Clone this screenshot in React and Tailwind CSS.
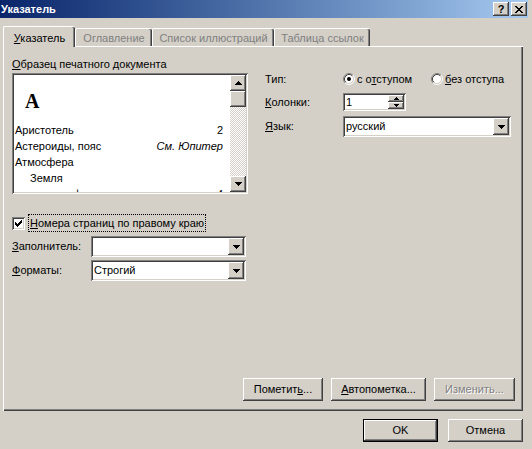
import React from "react";

const raised =
  "shadow-[inset_-1px_-1px_#404040,inset_1px_1px_#ffffff,inset_-2px_-2px_#808080,inset_2px_2px_#d4d0c8]";
const sunken =
  "shadow-[inset_1px_1px_#808080,inset_-1px_-1px_#ffffff,inset_2px_2px_#404040,inset_-2px_-2px_#d4d0c8]";

function DownArrow() {
  return (
    <svg width="7" height="4" viewBox="0 0 7 4" shapeRendering="crispEdges">
      <path d="M0 0h7v1h-1v1h-1v1h-1v1h-1v-1h-1v-1h-1v-1h-1z" fill="#000" />
    </svg>
  );
}
function UpArrow() {
  return (
    <svg width="7" height="4" viewBox="0 0 7 4" shapeRendering="crispEdges">
      <path d="M3 0h1v1h1v1h1v1h1v1h-7v-1h1v-1h1v-1h1z" fill="#000" />
    </svg>
  );
}
function SmallUp() {
  return (
    <svg width="5" height="3" viewBox="0 0 5 3" shapeRendering="crispEdges">
      <path d="M2 0h1v1h1v1h1v1h-5v-1h1v-1h1z" fill="#000" />
    </svg>
  );
}
function SmallDown() {
  return (
    <svg width="5" height="3" viewBox="0 0 5 3" shapeRendering="crispEdges">
      <path d="M0 0h5v1h-1v1h-1v1h-1v-1h-1v-1h-1z" fill="#000" />
    </svg>
  );
}

function Radio({ checked }) {
  return (
    <svg width="12" height="12" viewBox="0 0 12 12" className="shrink-0">
      <circle cx="6" cy="6" r="4.5" fill="#fff" />
      <path d="M2.11 9.89 A5.5 5.5 0 0 1 9.89 2.11" stroke="#808080" fill="none" />
      <path d="M9.89 2.11 A5.5 5.5 0 0 1 2.11 9.89" stroke="#ffffff" fill="none" />
      <path d="M2.82 9.18 A4.5 4.5 0 0 1 9.18 2.82" stroke="#404040" fill="none" />
      <path d="M9.18 2.82 A4.5 4.5 0 0 1 2.82 9.18" stroke="#d4d0c8" fill="none" />
      {checked && <circle cx="6" cy="6" r="2" fill="#000" />}
    </svg>
  );
}

function Combo({ className, value }) {
  return (
    <div className={`flex h-[21px] bg-white p-[2px] ${sunken} ${className}`}>
      <div className="flex-1 pl-[1px] leading-[17px]">{value}</div>
      <div className={`flex w-[16px] items-center justify-center bg-[#d4d0c8] ${raised}`}>
        <DownArrow />
      </div>
    </div>
  );
}

function Btn({ className, children, disabled, def }) {
  if (def) {
    return (
      <div className={`h-[23px] border border-black ${className}`}>
        <div className={`flex h-full w-full items-center justify-center bg-[#d4d0c8] ${raised}`}>{children}</div>
      </div>
    );
  }
  return (
    <div
      className={`flex h-[23px] items-center justify-center bg-[#d4d0c8] ${raised} ${
        disabled ? "text-[#808080] [text-shadow:1px_1px_0_#ffffff]" : ""
      } ${className}`}
    >
      {children}
    </div>
  );
}

function Row({ left, right, indent }) {
  return (
    <div className={`flex h-[16px] items-center justify-between leading-[16px] ${indent}`}>
      <span>{left}</span>
      <span>{right}</span>
    </div>
  );
}

export default function App() {
  return (
    <div className="flex h-[449px] w-[532px] overflow-hidden bg-[#d4d0c8] font-['Liberation_Sans',Arial,sans-serif] text-[11px] leading-[13px] text-black">
      <div className="flex w-[528px] flex-col">
        {/* title bar */}
        <div className="flex h-[18px] w-[528px] items-center justify-between bg-linear-to-r from-[#0a246a] to-[#a6caf0] pl-[1px] pr-[1px]">
          <span className="font-bold text-white">Указатель</span>
          <div className="flex gap-[2px]">
            <div className={`flex h-[14px] w-[16px] items-center justify-center bg-[#d4d0c8] text-[11px] font-bold ${raised}`}>
              ?
            </div>
            <div className={`flex h-[14px] w-[16px] items-center justify-center bg-[#d4d0c8] ${raised}`}>
              <svg width="8" height="7" viewBox="0 0 8 7" shapeRendering="crispEdges">
                <path
                  d="M0 0h2v1h1v1h2v-1h1v-1h2v1h-1v1h-1v1h-1v1h1v1h1v1h1v1h-2v-1h-1v-1h-2v1h-1v1h-2v-1h1v-1h1v-1h1v-1h-1v-1h-1v-1h-1z"
                  fill="#000"
                />
              </svg>
            </div>
          </div>
        </div>

        {/* tabs */}
        <div className="mt-[8px] flex h-[20px] items-end pl-[3px]">
          <div className="relative z-10 -mb-[1px] flex h-[21px] w-[72px] items-start justify-center rounded-tl-[2px] rounded-tr-[2px] border-l border-t border-white bg-[#d4d0c8] pt-[5px] shadow-[inset_-1px_0_#404040,inset_-2px_0_#808080]">
            <span>
              <u>У</u>казатель
            </span>
          </div>
          <div className="flex h-[18px] w-[77px] items-start justify-center rounded-tl-[2px] rounded-tr-[2px] border-l border-t border-white pt-[3px] text-[#808080] shadow-[inset_-1px_0_#404040,inset_-2px_0_#808080]">
            Оглавление
          </div>
          <div className="flex h-[18px] w-[122px] items-start justify-center rounded-tl-[2px] rounded-tr-[2px] border-l border-t border-white pt-[3px] text-[#808080] shadow-[inset_-1px_0_#404040,inset_-2px_0_#808080]">
            Список иллюстраций
          </div>
          <div className="flex h-[18px] w-[96px] items-start justify-center rounded-tl-[2px] rounded-tr-[2px] border-l border-t border-white pt-[3px] text-[#808080] shadow-[inset_-1px_0_#404040,inset_-2px_0_#808080]">
            Таблица ссылок
          </div>
        </div>

        {/* panel */}
        <div className="ml-[3px] flex h-[365px] w-[520px] flex-col bg-[#d4d0c8] shadow-[inset_1px_1px_#ffffff,inset_-1px_-1px_#404040,inset_-2px_-2px_#808080]">
          <div className="flex items-start pl-[9px] pt-[12px]">
            {/* left column */}
            <div className="flex w-[236px] flex-col">
              <div className="h-[13px]">
                <u>О</u>бразец печатного документа
              </div>
              <div className={`mt-[2px] flex h-[121px] w-[236px] bg-white p-[2px] ${sunken}`}>
                <div className="flex-1 overflow-hidden pl-[1px] pr-[7px]">
                  <div className="h-[47px] pl-[10px] pt-[16px] font-['Liberation_Serif','Times_New_Roman',serif] text-[20px] font-bold leading-[20px]">
                    A
                  </div>
                  <Row left="Аристотель" right="2" indent="" />
                  <Row left="Астероиды, пояс" right={<i className="italic">См. Юпитер</i>} indent="" />
                  <Row left="Атмосфера" right="" indent="" />
                  <Row left="Земля" right="" indent="pl-[15px]" />
                  <Row left="ионосфера" right="4" indent="pl-[28px]" />
                </div>
                <div className="flex w-[16px] flex-col">
                  <div className={`flex h-[16px] items-center justify-center bg-[#d4d0c8] ${raised}`}>
                    <UpArrow />
                  </div>
                  <div className={`h-[16px] bg-[#d4d0c8] ${raised}`} />
                  <div className="flex-1 bg-[repeating-conic-gradient(#ffffff_0_25%,#d4d0c8_0_50%)] bg-[length:2px_2px]" />
                  <div className={`flex h-[16px] items-center justify-center bg-[#d4d0c8] ${raised}`}>
                    <DownArrow />
                  </div>
                </div>
              </div>

              <div className="mt-[20px] flex h-[18px] items-center">
                <div className={`flex h-[13px] w-[13px] items-center justify-center bg-white ${sunken}`}>
                  <svg width="7" height="7" viewBox="0 0 7 7" shapeRendering="crispEdges">
                    <path d="M0 2h1v1h1v1h1v-1h1v-1h1v-1h1v-1h1v3h-1v1h-1v1h-1v1h-1v1h-1v-1h-1v-1h-1v-1h-1z" fill="#000" />
                  </svg>
                </div>
                <div className="ml-[3px] flex h-[18px] items-center border border-dotted border-black px-[1px]">
                  <span>
                    <u>Н</u>омера страниц по правому краю
                  </span>
                </div>
              </div>

              <div className="mt-[4px] flex items-center">
                <span className="w-[79px]">
                  <u>З</u>аполнитель:
                </span>
                <Combo className="w-[155px]" value="" />
              </div>
              <div className="mt-[3px] flex items-center">
                <span className="w-[79px]">
                  <u>Ф</u>орматы:
                </span>
                <Combo className="w-[155px]" value="Строгий" />
              </div>
            </div>

            {/* right column */}
            <div className="ml-[17px] flex w-[247px] flex-col pt-[14px]">
              <div className="flex h-[14px] items-center">
                <span className="w-[78px]">Тип:</span>
                <div className="flex w-[88px] items-center">
                  <Radio checked />
                  <span className="ml-[2px]">
                    с о<u>т</u>ступом
                  </span>
                </div>
                <div className="flex items-center">
                  <Radio />
                  <span className="ml-[2px]">
                    <u>б</u>ез отступа
                  </span>
                </div>
              </div>
              <div className="mt-[7px] flex items-center">
                <span className="w-[78px]">
                  <u>К</u>олонки:
                </span>
                <div className={`flex h-[18px] w-[63px] bg-white p-[2px] ${sunken}`}>
                  <div className="flex-1 pl-[1px] leading-[14px]">1</div>
                  <div className="flex w-[16px] flex-col">
                    <div className={`flex h-[7px] items-center justify-center bg-[#d4d0c8] ${raised}`}>
                      <SmallUp />
                    </div>
                    <div className={`flex h-[7px] items-center justify-center bg-[#d4d0c8] ${raised}`}>
                      <SmallDown />
                    </div>
                  </div>
                </div>
              </div>
              <div className="mt-[5px] flex items-center">
                <span className="w-[78px]">
                  <u>Я</u>зык:
                </span>
                <Combo className="w-[168px]" value="русский" />
              </div>
            </div>
          </div>

          <div className="mt-auto flex justify-end gap-[8px] pb-[10px] pr-[8px]">
            <Btn className="w-[80px]">
              <span>
                Пометит<u>ь</u>...
              </span>
            </Btn>
            <Btn className="w-[95px]">
              <span>
                <u>А</u>втопометка...
              </span>
            </Btn>
            <Btn className="w-[81px]" disabled>
              Изменить...
            </Btn>
          </div>
        </div>

        <div className="ml-[3px] mt-[8px] flex w-[520px] justify-end gap-[10px]">
          <Btn className="w-[75px]" def>
            OK
          </Btn>
          <Btn className="w-[75px]">Отмена</Btn>
        </div>
      </div>
      <div className="w-[4px]" />
    </div>
  );
}
